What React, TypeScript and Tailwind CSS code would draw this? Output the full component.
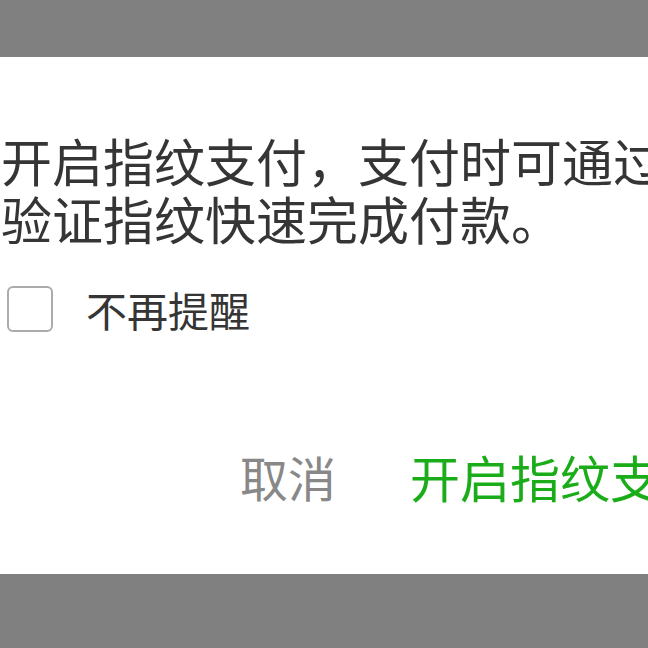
export default function App() {
  const font = { fontFamily: '"Noto Sans CJK SC", "Noto Sans", sans-serif' };
  return (
    <div className="w-[648px] h-[648px] bg-[#808080] overflow-hidden flex flex-col" style={font}>
      <div className="h-[57px] shrink-0" />
      <div className="h-[517px] shrink-0 bg-white flex flex-col overflow-hidden">
        {/* message */}
        <p className="mt-[74px] pl-[1px] text-[51px] leading-[58px] text-[#353535] whitespace-nowrap">
          开启指纹支付，支付时可通过
          <br />
          验证指纹快速完成付款。
        </p>

        {/* don't remind again */}
        <label className="mt-[38px] flex items-center gap-[33px] pl-[7px]">
          <span className="w-[46px] h-[46px] rounded-[6px] border-[2px] border-[#ababab] bg-white shrink-0" />
          <span className="text-[41px] leading-[48px] text-[#353535]">不再提醒</span>
        </label>

        {/* actions */}
        <div className="mt-[115px] flex items-center pl-[240px] gap-[74px] whitespace-nowrap">
          <button className="text-[48px] leading-[56px] text-[#888888]">取消</button>
          <button className="text-[50px] leading-[56px] text-[#1aad19]">开启指纹支付</button>
        </div>
      </div>
    </div>
  );
}
